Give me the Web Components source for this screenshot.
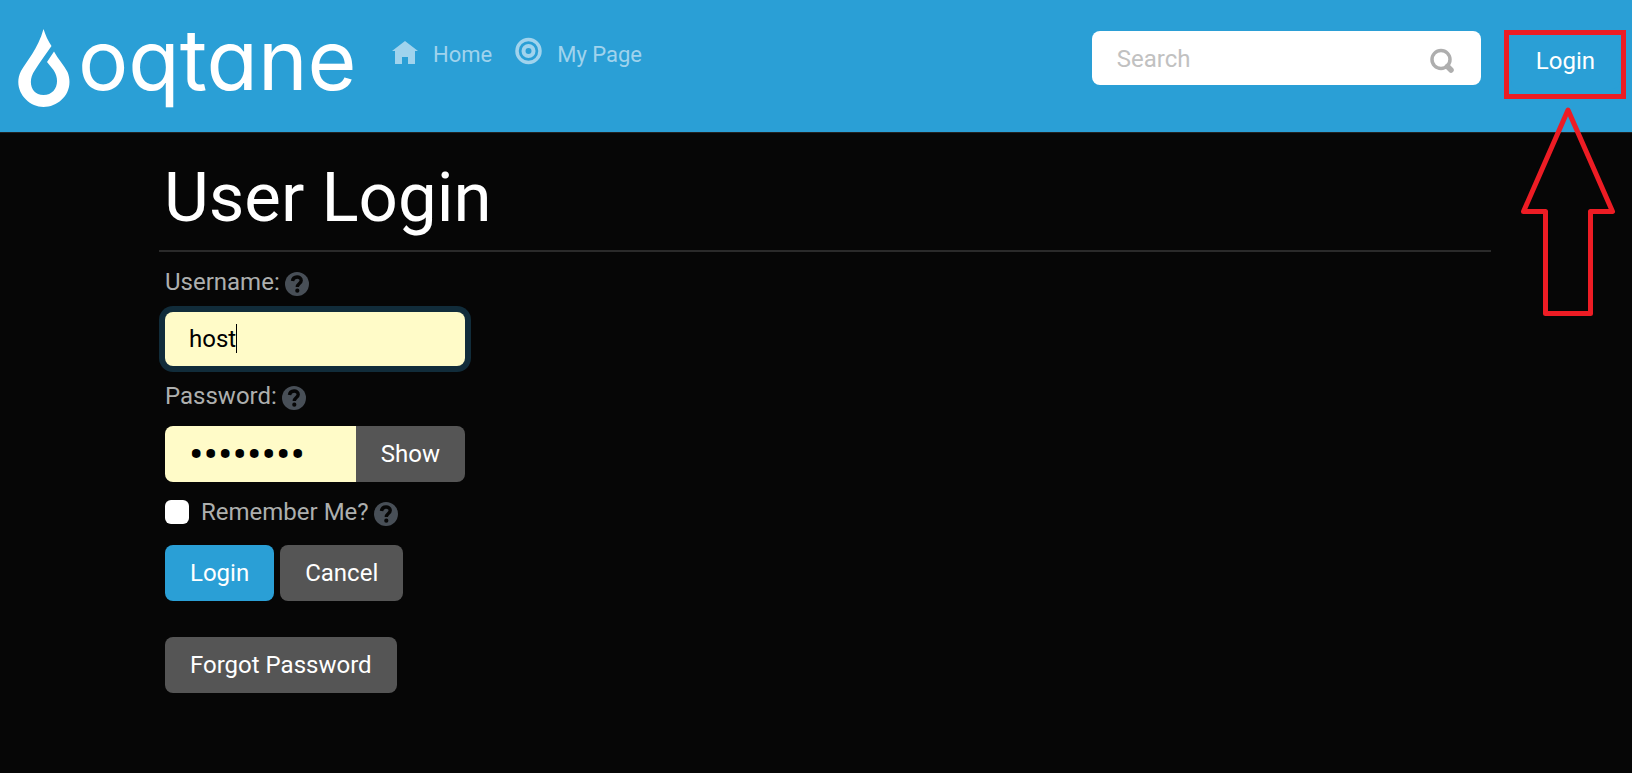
<!DOCTYPE html>
<html lang="en">
<head>
<meta charset="utf-8">
<title>User Login</title>
<style>
body{margin:0;min-height:100vh;background:#060606;color:#adafae;font:24px/36px Roboto,sans-serif}
</style>
</head>
<body>
<oq-app></oq-app>
<script>
const define=(name,html,setup)=>customElements.define(name,class extends HTMLElement{
  constructor(){
    super();
    const t=document.createElement('template');
    t.innerHTML='<style>*{box-sizing:border-box}</style>'+html;
    this.attachShadow({mode:'open',delegatesFocus:true}).append(t.content.cloneNode(true));
  }
  connectedCallback(){ if(setup) setup(this,this.shadowRoot); }
});

define('oq-logo',`<style>
:host{display:block}
a{display:flex;align-items:flex-start;gap:8px;color:#fff;text-decoration:none}
svg{display:block;margin-top:29px}
span{font:84px/120px Inter,sans-serif;font-feature-settings:"cv11"}
</style>
<a href="#" aria-label="oqtane"><svg width="52" height="78" viewBox="0 0 52 78" fill="#fff">
<path d="M25.500 0C27.500 6 30 12 33.500 17C28 25 22 33 17 41C9 52 13 66 25.500 66S43 52 35.500 41L29 33L36 22.500C40 30 46 36 49.500 43C57 62 42 78 25.500 78S-6 60 3 42C8 33 20 20 25.500 0Z"/></svg><span>oqtane</span></a>`);

define('oq-nav-link',`<style>
:host{display:block}
a{display:flex;gap:15px;color:#a0d3ed;font-size:22px;line-height:38px;text-decoration:none}
</style><a href="#"><slot name="icon"></slot><slot></slot></a>`);

define('oq-search',`<style>
:host{display:block;position:relative;width:389px}
input{display:block;width:100%;height:54px;padding:2px 80px 0 25px;border:0;border-radius:8px;background:#fff;color:#222;font:inherit}
input::placeholder{color:#c1c1c1;opacity:1}
button{position:absolute;right:24px;top:16px;padding:0;border:0;background:none}
svg{display:block}
</style>
<input type="text" placeholder="Search" aria-label="Search">
<button type="button" aria-label="Search"><svg width="28" height="28" viewBox="0 0 28 28" fill="none" stroke="#aeaeae"><circle cx="12" cy="12.500" r="9" stroke-width="3.500"/><path d="M18.500 19.500l3.500 3.500" stroke-width="5.500" stroke-linecap="round"/></svg></button>`);

define('oq-button',`<style>
:host{display:block}
button{display:block;height:56px;padding:0 25px;border:0;background:var(--button,#555);color:#fff;font:inherit;border-radius:var(--corners,8px)}
:host([primary]){--button:#2a9fd6}
</style><button type="button"><slot></slot></button>`);

define('oq-callout',`<style>
:host{display:block;position:absolute;right:6px;top:30px;pointer-events:none}
svg{display:block}
</style>
<svg width="122" height="288" fill="none" stroke="#ed1c24" stroke-width="5"><path d="M2.500 2.500h117v64h-117z"/><path d="M64 80L108.500 181.500H86.500V283.500H41.500V181.500H19.500Z" stroke-linejoin="round"/></svg>`);

define('oq-header',`<style>
:host{display:block;position:relative;background:#2a9fd6;border-bottom:1px solid #222}
header{display:flex;align-items:flex-start;height:132px;padding:0 12px 0 18px}
oq-logo{width:374px}
nav{display:flex;gap:23px;flex:1;padding-top:36px}
nav svg{display:block}
oq-search{margin:31px 30px 0 0}
oq-button{margin-top:33px}
</style>
<header>
<oq-logo></oq-logo>
<nav>
<oq-nav-link><svg slot="icon" width="26" height="30" viewBox="0 0 26 30" fill="currentColor"><path d="M13 5L26 15H23V28H16V21H10V28H3V15H0Z"/></svg>Home</oq-nav-link>
<oq-nav-link><svg slot="icon" width="27" height="30" viewBox="0 0 27 30" fill="none" stroke="currentColor"><circle cx="13.500" cy="15" r="11.500" stroke-width="3.500"/><circle cx="13.500" cy="15" r="5" stroke-width="4"/></svg>My Page</oq-nav-link>
</nav>
<oq-search></oq-search>
<oq-button primary>Login</oq-button>
</header>
<oq-callout></oq-callout>`);

define('oq-help',`<style>
:host{display:block}
svg{display:block}
</style><svg width="24" height="24" viewBox="0 0 24 24" role="img" aria-label="Help"><circle cx="12" cy="12" r="12" fill="#484f57"/><path d="M7.500 9C8 3.800 16.200 3.800 16.200 8.500C16.200 11.500 12.300 11.500 12.300 15" fill="none" stroke="#060606" stroke-width="3.400"/><circle cx="12.300" cy="18.700" r="2.100" fill="#060606"/></svg>`);

define('oq-field',`<style>
:host{display:block;width:300px}
.label{display:flex;align-items:center;gap:5px;margin-bottom:12px}
oq-help{padding-top:4px}
.row{display:flex}
input{flex:1;min-width:0;height:var(--field-height,54px);padding:0 24px;border:0;border-radius:var(--field-corners,8px);background:#fffbc8;color:#000;font:inherit;outline:0}
input:focus{box-shadow:0 0 0 6px #112c3a;caret-color:transparent;background:linear-gradient(#000,#000) 71px 12px/1px 29px no-repeat #fffbc8}
input[type=password]{padding-right:0;font-size:43px}
</style>
<div class="label"><label for="field"></label><oq-help></oq-help></div>
<div class="row"><input id="field"><slot></slot></div>`,(el,root)=>{
  root.querySelector('label').textContent=el.getAttribute('label');
  const input=root.querySelector('input');
  input.type=el.getAttribute('type')||'text';
  input.value=el.getAttribute('value')||'';
  if(el.hasAttribute('focused')) input.focus();
});

define('oq-check',`<style>
:host{display:flex;align-items:center}
input{appearance:none;width:24px;height:24px;margin:0 12px 0 0;border-radius:6px;background:#fff}
input:checked{background:#2a9fd6}
oq-help{padding:4px 0 0 5px}
</style><input type="checkbox" id="check"><label for="check">Remember Me?</label><oq-help></oq-help>`);

define('oq-login-form',`<style>
:host{display:block;padding:24px 141px 36px 159px}
h1{margin:0 0 11px;padding-left:5px;color:#fff;font-size:69px;font-weight:400;line-height:82px}
hr{margin:0 0 12px;border:0;height:2px;background:#2a2a2a}
form{padding-left:6px;display:flex;flex-direction:column;align-items:flex-start;gap:12px}
.password{--field-height:56px;--field-corners:8px 0 0 8px}
.password oq-button{--corners:0 8px 8px 0}
.actions{display:flex;gap:6px;margin:3px 0 24px}
</style>
<h1>User Login</h1><hr>
<form>
<oq-field label="Username:" value="host" focused></oq-field>
<oq-field class="password" label="Password:" type="password" value="password"><oq-button>Show</oq-button></oq-field>
<oq-check></oq-check>
<div class="actions"><oq-button primary>Login</oq-button><oq-button>Cancel</oq-button></div>
<oq-button>Forgot Password</oq-button>
</form>`);

define('oq-app',`<style>:host{display:block}main{display:block}</style>
<oq-header></oq-header><main><oq-login-form></oq-login-form></main>`);
</script>
</body>
</html>
